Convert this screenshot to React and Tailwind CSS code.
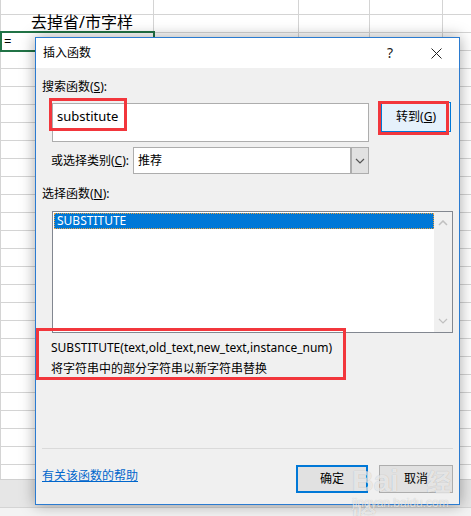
import React from "react";

const font = { fontFamily: '"Noto Sans", "Noto Sans CJK SC", sans-serif' };

function Grid() {
  const rows = Array.from({ length: 26 });
  const Row = ({ h, children }) => (
    <div className={`flex border-b border-[#d4d4d4] ${h}`}>
      <div className="w-[153px] border-r border-[#d4d4d4] relative">{children}</div>
      <div className="w-[145px] border-r border-[#d4d4d4]" />
      <div className="w-[71px] border-r border-[#d4d4d4]" />
      <div className="w-[73px] border-r border-[#d4d4d4]" />
      <div className="flex-1" />
    </div>
  );
  return (
    <div className="absolute inset-0 bg-white">
      <div className="h-[479px] overflow-hidden border-l border-[#d4d4d4]">
        <Row h="h-[15px]" />
        <Row h="h-[18px]">
          <div className="absolute left-[30px] top-[-3px] text-[16px] leading-[20px] text-black" style={font}>
            去掉省/市字样
          </div>
        </Row>
        {rows.map((_, i) => (
          <Row key={i} h="h-[18px]" />
        ))}
      </div>
      <div className="h-[28px] bg-[#e6e6e6] border-t border-[#d0d0d0]" />
      <div className="h-[9px] bg-[#f3f3f3] border-t border-[#d4d4d4]" />
      <div className="absolute left-0 top-[31px] w-[155px] h-[21px] border-2 border-[#217346] text-[13px] leading-[17px] pl-[2px] text-black" style={font}>
        =
      </div>
    </div>
  );
}

function ChevronDown({ className }) {
  return (
    <svg width="10" height="6" viewBox="0 0 10 6" className={className}>
      <path d="M1 1 L5 5 L9 1" fill="none" stroke="currentColor" strokeWidth="1.2" />
    </svg>
  );
}
function ChevronUp({ className }) {
  return (
    <svg width="10" height="6" viewBox="0 0 10 6" className={className}>
      <path d="M1 5 L5 1 L9 5" fill="none" stroke="currentColor" strokeWidth="1.5" />
    </svg>
  );
}

function Dialog() {
  return (
    <div
      className="absolute left-[35px] top-[37px] w-[425px] h-[468px] border border-[#2b7bd0] bg-[#f0f0f0] shadow-[0_0_14px_rgba(0,0,0,0.35)] text-[12px] text-black flex flex-col"
      style={font}
    >
      <div className="h-[30px] bg-white flex items-center pl-[7px] relative">
        <span className="leading-[16px]">插入函数</span>
        <span className="absolute left-[351px] top-[6px] text-[14px] leading-[18px] text-[#222]">?</span>
        <svg className="absolute left-[395px] top-[10px]" width="11" height="11" viewBox="0 0 11 11">
          <path d="M0.5 0.5 L10.5 10.5 M10.5 0.5 L0.5 10.5" stroke="#222" strokeWidth="1" />
        </svg>
      </div>
      <div className="flex flex-col">
        <div className="mt-[11px] ml-[6px] leading-[16px]">
          搜索函数(<span className="underline">S</span>):
        </div>
        <div className="mt-[7px] flex items-start">
          <div className="ml-[16px] mt-[1px] w-[317px] h-[39px] bg-white border border-[#adadad] pl-[4px] pt-[3px] leading-[18px] text-[13px]">
            substitute
          </div>
          <div className="ml-[12px] w-[70px] h-[30px] bg-[#e5f1fb] border border-[#0078d7] flex items-center justify-center leading-[16px]">
            转到(<span className="underline">G</span>)
          </div>
        </div>
        <div className="mt-[5px] flex items-center h-[27px]">
          <div className="ml-[15px] w-[82px] leading-[16px]">
            或选择类别(<span className="underline">C</span>):
          </div>
          <div className="w-[236px] h-[27px] bg-white border border-[#adadad] flex">
            <div className="flex-1 pl-[4px] leading-[25px]">推荐</div>
            <div className="w-[18px] h-full bg-[#e1e1e1] border-l-2 border-[#adadad] flex items-center justify-center">
              <ChevronDown className="text-[#555]" />
            </div>
          </div>
        </div>
        <div className="mt-[12px] ml-[6px] leading-[16px]">
          选择函数(<span className="underline">N</span>):
        </div>
        <div className="mt-[9px] ml-[16px] w-[401px] h-[122px] bg-white border border-[#828790] flex">
          <div className="flex-1 pt-[1px] pl-[1px]">
            <div className="h-[16px] bg-[#0078d7] border border-dotted border-[#e8a040] text-white leading-[14px] pl-[2px]">
              SUBSTITUTE
            </div>
          </div>
          <div className="w-[18px] bg-[#f0f0f0] flex flex-col items-center justify-between py-[8px]">
            <ChevronUp className="text-[#c0c0c0]" />
            <ChevronDown className="text-[#c0c0c0]" />
          </div>
        </div>
        <div className="mt-[4px] ml-[15px] leading-[21px]">
          <div>SUBSTITUTE(text,old_text,new_text,instance_num)</div>
          <div>将字符串中的部分字符串以新字符串替换</div>
        </div>
        <div className="mt-[69px] ml-[6px] w-[411px] h-px bg-[#dadada]" />
        <div className="mt-[16px] flex items-start">
          <div className="ml-[6px] mt-[3px] leading-[16px] text-[#0066cc] underline">有关该函数的帮助</div>
          <div className="ml-auto flex gap-[11px] mr-[6px]">
            <div className="w-[72px] h-[28px] bg-[#e1e1e1] border-2 border-[#0078d7] flex items-center justify-center">确定</div>
            <div className="w-[74px] h-[28px] bg-[#e1e1e1] border border-[#adadad] flex items-center justify-center">取消</div>
          </div>
        </div>
      </div>
    </div>
  );
}

export default function App() {
  return (
    <div className="relative w-[471px] h-[516px] overflow-hidden bg-white">
      <Grid />
      <Dialog />
      <div className="absolute left-[49px] top-[98px] w-[78px] h-[33px] border-[3px] border-[#f2363c]" />
      <div className="absolute left-[378px] top-[101px] w-[71px] h-[34px] border-[3px] border-[#f2363c]" />
      <div className="absolute left-[36px] top-[328px] w-[310px] h-[52px] border-[3px] border-[#f2363c]" />
      <div
        className="absolute left-[352px] top-[465px] text-[30px] leading-[32px] font-bold text-white/70 [text-shadow:0_0_1px_rgba(0,0,0,0.25)]"
        style={{ fontFamily: '"Liberation Sans", "Noto Sans CJK SC", sans-serif' }}
      >
        Bai<span className="ml-[28px] text-[24px]">经验</span>
      </div>
      <div
        className="absolute left-[352px] top-[496px] text-[12px] leading-[14px] text-white/70 [text-shadow:0_0_1px_rgba(0,0,0,0.25)]"
        style={{ fontFamily: '"Liberation Sans", sans-serif' }}
      >
        jingyan.baidu.com
      </div>
    </div>
  );
}
